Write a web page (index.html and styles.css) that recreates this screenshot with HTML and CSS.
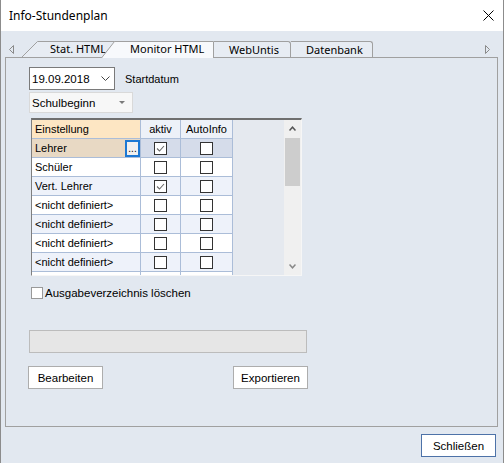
FILE: index.html
```html
<!DOCTYPE html>
<html lang="de">
<head>
<meta charset="utf-8">
<title>Info-Stundenplan</title>
<link rel="stylesheet" href="styles.css">
</head>
<body>
<div class="window">
  <div class="titlebar">
    <span class="title">Info-Stundenplan</span>
    <svg class="close" width="11" height="11" viewBox="0 0 11 11"><path d="M0.5 0.5 L10.5 10.5 M10.5 0.5 L0.5 10.5" stroke="#000" stroke-width="1" fill="none"/></svg>
  </div>
  <div class="main">
    <div class="tabs">
      <div class="tab-arrow left"><svg width="5" height="9" viewBox="0 0 5 9"><path d="M4.5 0.5 L0.5 4.5 L4.5 8.5 Z" fill="none" stroke="#8a8a8a"/></svg></div>
      <div class="tab tab-stat">
        <svg class="tab-shape" width="94" height="16" viewBox="0 0 94 16"><path d="M0 16 L15.5 0.5 L94 0.5 L94 16 Z" fill="#e7ecf3"/><path d="M0 16 L15.5 0.5 L94 0.5" fill="none" stroke="#a0a0a0"/></svg>
        <span>Stat. HTML</span>
      </div>
      <div class="tab tab-active">
        <svg class="tab-shape" width="113" height="17" viewBox="0 0 113 17"><path d="M0.5 17 L13.5 0.5 L112.5 0.5 L112.5 17 Z" fill="#f7f9fc"/><path d="M0.5 17 L13.5 0.5 L112.5 0.5 L112.5 17" fill="none" stroke="#a0a0a0"/></svg>
        <span>Monitor HTML</span>
      </div>
      <div class="tab tab-plain tab-webuntis"><span>WebUntis</span></div>
      <div class="tab tab-plain tab-datenbank"><span>Datenbank</span></div>
      <div class="tabs-spacer"></div>
      <div class="tab-arrow right"><svg width="5" height="9" viewBox="0 0 5 9"><path d="M0.5 0.5 L4.5 4.5 L0.5 8.5 Z" fill="none" stroke="#8a8a8a"/></svg></div>
    </div>
    <div class="panel">
      <div class="row-date">
        <div class="combo-date">
          <span>19.09.2018</span>
          <svg class="chev" width="9" height="5" viewBox="0 0 9 5"><path d="M0.5 0.5 L4.5 4.5 L8.5 0.5" fill="none" stroke="#444" stroke-width="1"/></svg>
        </div>
        <span class="label-start">Startdatum</span>
      </div>
      <div class="combo-begin">
        <span>Schulbeginn</span>
        <svg class="tri" width="6" height="3" viewBox="0 0 6 3"><path d="M0 0 L6 0 L3 3 Z" fill="#7a7a7a"/></svg>
      </div>
      <div class="grid">
        <div class="gtable">
          <div class="cell head head-first">Einstellung</div>
          <div class="cell head center">aktiv</div>
          <div class="cell head center">AutoInfo</div>

          <div class="cell sel-first"><span>Lehrer</span><span class="dots">...</span></div>
          <div class="cell sel center"><span class="cb"><svg width="11" height="11" viewBox="0 0 11 11"><path d="M2 5.5 L4.5 8 L9 3" fill="none" stroke="#6a6a6a" stroke-width="1.1"/></svg></span></div>
          <div class="cell sel center"><span class="cb"></span></div>

          <div class="cell">Schüler</div>
          <div class="cell center"><span class="cb"></span></div>
          <div class="cell center"><span class="cb"></span></div>

          <div class="cell alt">Vert. Lehrer</div>
          <div class="cell alt center"><span class="cb"><svg width="11" height="11" viewBox="0 0 11 11"><path d="M2 5.5 L4.5 8 L9 3" fill="none" stroke="#6a6a6a" stroke-width="1.1"/></svg></span></div>
          <div class="cell alt center"><span class="cb"></span></div>

          <div class="cell">&lt;nicht definiert&gt;</div>
          <div class="cell center"><span class="cb"></span></div>
          <div class="cell center"><span class="cb"></span></div>

          <div class="cell alt">&lt;nicht definiert&gt;</div>
          <div class="cell alt center"><span class="cb"></span></div>
          <div class="cell alt center"><span class="cb"></span></div>

          <div class="cell">&lt;nicht definiert&gt;</div>
          <div class="cell center"><span class="cb"></span></div>
          <div class="cell center"><span class="cb"></span></div>

          <div class="cell alt">&lt;nicht definiert&gt;</div>
          <div class="cell alt center"><span class="cb"></span></div>
          <div class="cell alt center"><span class="cb"></span></div>

          <div class="cell partial"></div>
          <div class="cell partial center"><span class="cb"></span></div>
          <div class="cell partial center"><span class="cb"></span></div>
        </div>
        <div class="filler"></div>
        <div class="scrollbar">
          <div class="sb-btn"><svg width="7" height="5" viewBox="0 0 7 5"><path d="M0.5 4.5 L3.5 1.2 L6.5 4.5" fill="none" stroke="#555" stroke-width="1.5"/></svg></div>
          <div class="sb-thumb"></div>
          <div class="sb-track"></div>
          <div class="sb-btn"><svg width="7" height="5" viewBox="0 0 7 5"><path d="M0.5 0.5 L3.5 3.8 L6.5 0.5" fill="none" stroke="#888" stroke-width="1.5"/></svg></div>
        </div>
      </div>
      <label class="check-row"><span class="cb2"></span><span>Ausgabeverzeichnis löschen</span></label>
      <div class="progress"></div>
      <div class="btn-row">
        <div class="btn">Bearbeiten</div>
        <div class="btn">Exportieren</div>
      </div>
    </div>
    <div class="footer">
      <div class="btn btn-default">Schließen</div>
    </div>
  </div>
</div>
</body>
</html>
```

FILE: styles.css
```css
* { box-sizing: border-box; }
html, body { margin: 0; padding: 0; }
body {
  width: 504px;
  height: 463px;
  overflow: hidden;
  background: #e2e8f0;
  font-family: "Liberation Sans", Arial, sans-serif;
  font-size: 11px;
  color: #000;
}
.window {
  width: 504px;
  height: 463px;
  border-left: 1px solid #8c8c8c;
  border-right: 1px solid #8c8c8c;
  background: #e2e8f0;
  display: flex;
  flex-direction: column;
}
.titlebar {
  height: 31px;
  flex: none;
  background: #fff;
  display: flex;
  align-items: center;
  padding-left: 8px;
  padding-right: 9px;
  font-family: "Noto Sans", sans-serif;
  font-size: 12px;
}
.title { flex: 1; }
.main {
  flex: 1;
  padding-top: 10px;
  display: flex;
  flex-direction: column;
}
.tabs {
  height: 16px;
  display: flex;
  position: relative;
  z-index: 1;
  font-family: "Noto Sans", sans-serif;
  font-size: 11px;
  line-height: 14px;
}
.tab-arrow { display: flex; align-items: center; }
.tab-arrow.left { width: 21px; padding-left: 8px; }
.tab-arrow.right { width: 19px; padding-left: 1px; }
.tabs-spacer { flex: 1; }
.tab {
  position: relative;
  height: 16px;
  display: flex;
  align-items: center;
  white-space: nowrap;
  flex: none;
}
.tab-shape { position: absolute; left: 0; top: 0; }
.tab span { position: relative; }
.tab-stat { width: 94px; padding-left: 28px; }
.tab-active {
  width: 113px;
  height: 17px;
  margin-left: -15px;
  padding-left: 29px;
  padding-bottom: 1px;
  z-index: 2;
}
.tab-plain {
  background: #e7ecf3;
  border-top: 1px solid #a0a0a0;
  border-right: 1px solid #a0a0a0;
  border-top-right-radius: 3px;
}
.tab-webuntis { width: 77px; padding-left: 15px; }
.tab-datenbank { width: 82px; padding-left: 15px; }

.panel {
  margin-left: 4px;
  width: 493px;
  height: 370px;
  flex: none;
  border: 1px solid #a0a0a0;
  display: flex;
  flex-direction: column;
  padding-left: 23px;
}
.row-date {
  margin-top: 9px;
  display: flex;
  align-items: center;
}
.combo-date {
  width: 86px;
  height: 23px;
  border: 1px solid #7a7a7a;
  background: #fff;
  display: flex;
  align-items: center;
  padding-left: 2px;
  padding-right: 4px;
  font-size: 11.5px;
}
.chev { margin-left: auto; }
.label-start { margin-left: 10px; }
.combo-begin {
  margin-top: 2px;
  width: 104px;
  height: 21px;
  border: 1px solid #d9d9d9;
  background: #f7f7f7;
  display: flex;
  align-items: center;
  padding-left: 2px;
  padding-right: 7px;
  font-size: 11.5px;
}
.tri { margin-left: auto; }

.grid {
  margin-top: 5px;
  margin-left: 2px;
  width: 271px;
  height: 158px;
  border-top: 2px solid #6f6f6f;
  border-left: 1px solid #7f7f7f;
  border-right: 1px solid #f6f6f6;
  border-bottom: 1px solid #f6f6f6;
  display: flex;
  overflow: hidden;
}
.gtable {
  width: 201px;
  height: 155px;
  overflow: hidden;
  display: grid;
  grid-template-columns: 109px 40px 52px;
  grid-auto-rows: 19px;
  align-content: start;
  background: #fff;
}
.cell {
  border-right: 1px solid #abbdd8;
  border-bottom: 1px solid #abbdd8;
  padding-left: 3px;
  display: flex;
  align-items: center;
  white-space: nowrap;
  background: #fff;
}
.cell.center { justify-content: center; padding-left: 0; }
.cell.alt { background: #eef2fa; }
.head { background: #edf1f8; }
.head-first { background: #fde6c3; }
.sel-first {
  background: #e8d9c4;
  justify-content: space-between;
  align-items: stretch;
}
.sel-first span:first-child { display: flex; align-items: center; }
.sel { background: #d5dcea; }
.dots {
  width: 15px;
  margin: 1px 0 0 0;
  border: 2px solid #1b78d4;
  background: #f0f0f0;
  display: flex;
  align-items: flex-end;
  justify-content: center;
  line-height: 10px;
  font-size: 10px;
  padding-bottom: 1px;
}
.cb {
  width: 13px;
  height: 13px;
  border: 1px solid #333;
  background: #fff;
  display: flex;
  align-items: center;
  justify-content: center;
}
.filler { width: 51px; background: #e5e9ef; }
.scrollbar {
  width: 17px;
  height: 155px;
  background: #f0f0f0;
  display: flex;
  flex-direction: column;
}
.sb-btn {
  height: 17px;
  flex: none;
  display: flex;
  align-items: center;
  justify-content: center;
}
.sb-thumb { height: 48px; flex: none; margin: 1px 1px 0 1px; background: #cdcdcd; }
.sb-track { flex: 1; }

.check-row {
  margin-top: 11px;
  margin-left: 2px;
  display: flex;
  align-items: center;
  height: 12px;
  font-size: 11.5px;
}
.cb2 {
  width: 12px;
  height: 12px;
  border: 1px solid #999;
  background: #fff;
  margin-right: 2px;
}
.progress {
  margin-top: 31px;
  width: 278px;
  height: 23px;
  border: 1px solid #bcbcbc;
  background: #e6e6e6;
}
.btn-row {
  margin-top: 13px;
  margin-left: -1px;
  width: 280px;
  display: flex;
  justify-content: space-between;
}
.btn {
  width: 75px;
  height: 23px;
  border: 1px solid #adadad;
  background: #fff;
  display: flex;
  align-items: center;
  justify-content: center;
  font-size: 11.5px;
}
.footer {
  margin-top: 7px;
  display: flex;
  justify-content: flex-end;
  padding-right: 7px;
}
.btn-default { border-color: #4d72a8; }
```
